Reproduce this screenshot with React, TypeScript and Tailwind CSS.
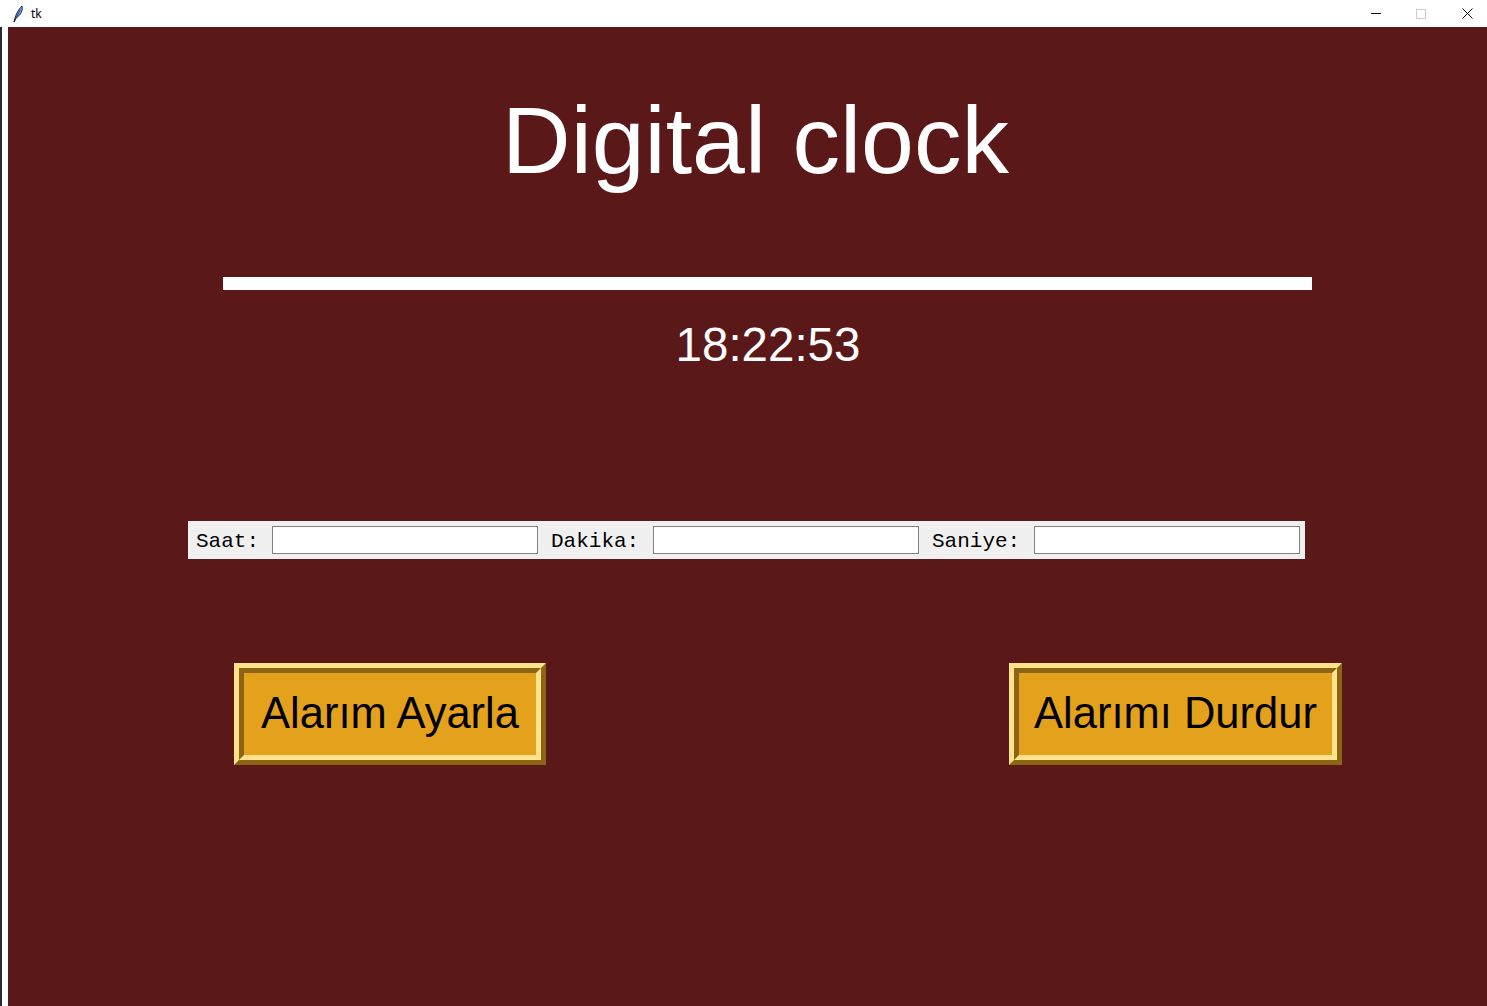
import React from 'react';

const FeatherIcon: React.FC = () => (
  <svg width="12" height="18" viewBox="0 0 12 18">
    <path d="M2 17 C3 12 5 6 10 1 C11 5 9 10 4 13 Z" fill="#6fa8e8" stroke="#1a2a55" strokeWidth="1" />
    <path d="M2 17 L8 5" stroke="#1a2a55" strokeWidth="0.8" />
  </svg>
);

const TitleBar: React.FC = () => (
  <div className="flex h-[27px] items-center bg-white" style={{ fontFamily: '"Noto Sans", "Liberation Sans", sans-serif' }}>
    <div className="ml-[12px] flex items-center">
      <FeatherIcon />
    </div>
    <span className="ml-[7px] text-[12px] text-black">tk</span>
    <div className="ml-auto flex h-full items-center">
      {/* minimize */}
      <div className="flex h-full w-[44px] items-center justify-center">
        <div className="h-px w-[10px] bg-black" />
      </div>
      {/* maximize (disabled) */}
      <div className="mr-[3px] flex h-full w-[46px] items-center justify-center">
        <div className="h-[10px] w-[10px] border border-[#cccccc]" />
      </div>
      {/* close */}
      <div className="flex h-full w-[40px] items-center justify-center">
        <svg width="11" height="11" viewBox="0 0 11 11">
          <path d="M0.5 0.5 L10.5 10.5 M10.5 0.5 L0.5 10.5" stroke="#000" strokeWidth="1" />
        </svg>
      </div>
    </div>
  </div>
);

const RidgeButton: React.FC<{ label: string; width: string }> = ({ label, width }) => (
  <div
    className={`${width} h-[102px] border-[5px] border-t-[#ffe38c] border-l-[#ffe38c] border-r-[#8b6414] border-b-[#8b6414]`}
  >
    <div className="flex h-full w-full items-center justify-center border-[5px] border-t-[#8b6414] border-l-[#8b6414] border-r-[#ffe38c] border-b-[#ffe38c] bg-[#e4a11b]">
      <span
        className="text-[43.5px] leading-none text-black"
        style={{ fontFamily: '"Liberation Sans", Arial, sans-serif' }}
      >
        {label}
      </span>
    </div>
  </div>
);

const Field: React.FC<{ label: string; labelWidth: string; first?: boolean }> = ({ label, labelWidth, first }) => (
  <div className={`flex items-center ${first ? '' : 'ml-[13px]'}`}>
    <span className={`${labelWidth} mt-[3px] whitespace-nowrap text-[21px] leading-none text-black`}>{label}</span>
    <input
      type="text"
      className="ml-[13px] h-[28px] w-[266px] border border-[#828282] bg-white outline-none"
    />
  </div>
);

const App: React.FC = () => {
  return (
    <div className="flex h-[1006px] w-[1487px] flex-col overflow-hidden bg-white">
      <TitleBar />
      <div className="flex flex-1">
        <div className="w-[2px] bg-[#2b2b2b]" />
        <div className="w-[6px] bg-white" />
        <div
          className="flex flex-1 flex-col bg-[#5b1819]"
          style={{ fontFamily: '"Liberation Sans", Arial, sans-serif' }}
        >
          <h1 className="mt-[66px] pl-[16px] text-center text-[95px] leading-none text-white">
            Digital clock
          </h1>

          <div className="ml-[215px] mt-[89px] h-[13px] w-[1089px] bg-white" />

          <div className="mt-[31px] pl-[41px] text-center text-[47.5px] leading-none text-white">
            18:22:53
          </div>

          <div
            className="ml-[180px] mt-[152px] flex h-[38px] w-[1117px] items-center bg-[#f0f0f0] pl-[8px]"
            style={{ fontFamily: '"Liberation Mono", "Courier New", monospace' }}
          >
            <Field label="Saat:" labelWidth="w-[63px]" first />
            <Field label="Dakika:" labelWidth="w-[89px]" />
            <Field label="Saniye:" labelWidth="w-[89px]" />
          </div>

          <div className="ml-[226px] mt-[104px] flex gap-[463px]">
            <RidgeButton label="Alarım Ayarla" width="w-[312px]" />
            <RidgeButton label="Alarımı Durdur" width="w-[333px]" />
          </div>
        </div>
      </div>
    </div>
  );
};

export default App;
